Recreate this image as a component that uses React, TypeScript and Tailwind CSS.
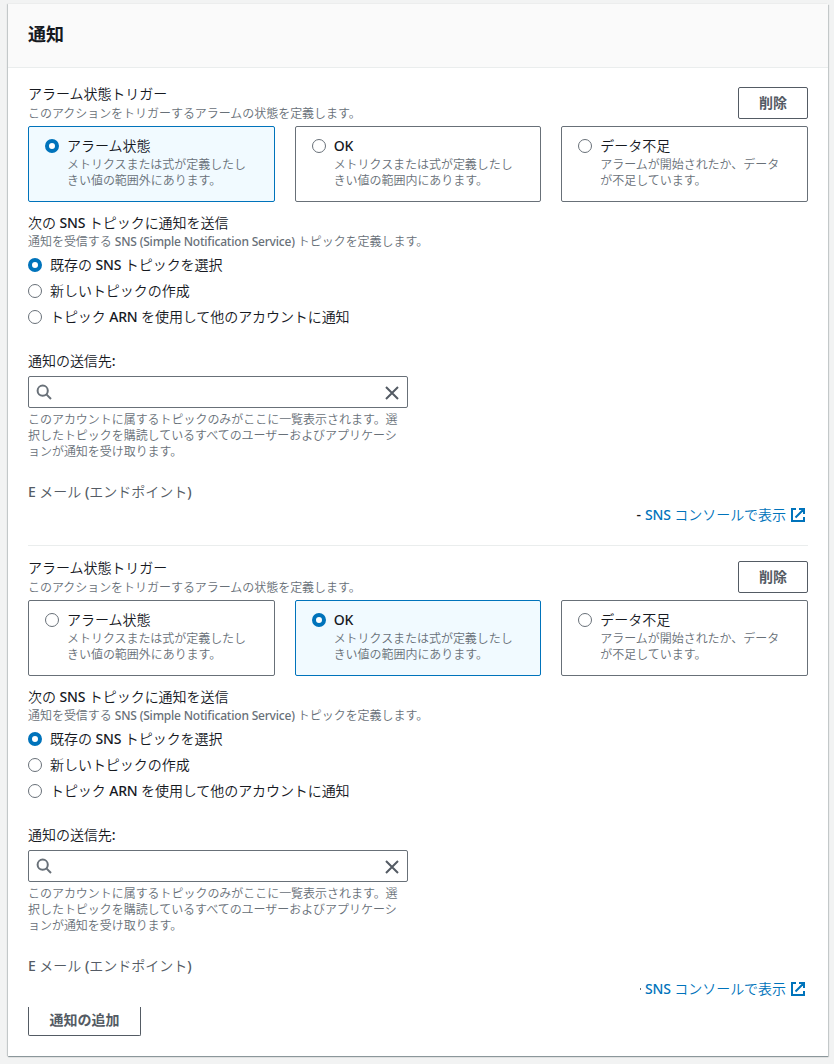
import { ReactNode } from "react";

function Radio({ checked }: { checked: boolean }) {
  return (
    <svg viewBox="0 0 14 14" className="size-3.5 shrink-0">
      {checked ? (
        <circle cx="7" cy="7" r="5" fill="#fff" stroke="#0073bb" strokeWidth="4" />
      ) : (
        <circle cx="7" cy="7" r="6.5" fill="#fff" stroke="#687078" strokeWidth="1" />
      )}
    </svg>
  );
}

function Latin({ children }: { children: ReactNode }) {
  return <span className="font-medium tracking-[-0.2px]">{children}</span>;
}

const states = [
  { title: "アラーム状態", lines: ["メトリクスまたは式が定義したし", "きい値の範囲外にあります。"] },
  { title: "OK", lines: ["メトリクスまたは式が定義したし", "きい値の範囲内にあります。"] },
  { title: "データ不足", lines: ["アラームが開始されたか、データ", "が不足しています。"] },
];

function StateCard({ index, selected }: { index: number; selected: boolean }) {
  const { title, lines } = states[index];
  return (
    <div
      className={`flex h-[76px] gap-2 rounded-xs border pt-2 pl-4 ${
        selected ? "border-[#0073bb] bg-[#f1faff]" : "border-[#687078] bg-white"
      }`}
    >
      <div className="pt-1">
        <Radio checked={selected} />
      </div>
      <div className="whitespace-nowrap">
        <div className="leading-[22px]">{title === "OK" ? <Latin>OK</Latin> : title}</div>
        <div className="text-xs leading-4 text-[#687078]">
          {lines.map((line) => (
            <div key={line}>{line}</div>
          ))}
        </div>
      </div>
    </div>
  );
}

function SearchIcon() {
  return (
    <svg viewBox="0 0 16 16" className="size-4" fill="none" stroke="#687078" strokeWidth="2">
      <circle cx="6.7" cy="6.7" r="5.1" />
      <path d="M10.4 10.4 15 15" />
    </svg>
  );
}

function CloseIcon() {
  return (
    <svg viewBox="0 0 16 16" className="mt-0.5 size-4" fill="none" stroke="#545b64" strokeWidth="2">
      <path d="M2 2 14 14M14 2 2 14" />
    </svg>
  );
}

function ExternalIcon() {
  return (
    <svg viewBox="0 0 16 16" className="size-4" fill="none" stroke="#0073bb" strokeWidth="2">
      <path d="M6 2H2v12h12v-4M9 2h5v5M13.5 2.5 5.5 10.5" />
    </svg>
  );
}

function Notification({ selected, dash, last }: { selected: number; dash: ReactNode; last?: boolean }) {
  return (
    <section className={last ? "pt-[11px]" : "h-[474px] border-b border-[#eaeded] pt-[11px]"}>
      <div className="flex justify-between">
        <div>
          <h3 className="leading-[22px]">アラーム状態トリガー</h3>
          <p className="mt-px text-xs leading-4 text-[#687078]">このアクションをトリガーするアラームの状態を定義します。</p>
        </div>
        <button className="mt-1 h-8 w-[70px] rounded-xs border border-[#545b64] font-bold text-[#545b64]">削除</button>
      </div>
      <div className="mt-1 grid grid-cols-3 gap-5">
        {states.map((state, i) => (
          <StateCard key={state.title} index={i} selected={i === selected} />
        ))}
      </div>
      <h3 className="mt-2.5 leading-[22px]">
        次の <Latin>SNS</Latin> トピックに通知を送信
      </h3>
      <p className="text-xs leading-4 text-[#687078]">
        通知を受信する <Latin>SNS (Simple Notification Service)</Latin> トピックを定義します。
      </p>
      <div className="mt-1 flex flex-col gap-1 leading-[22px]">
        <div className="flex items-center gap-2">
          <Radio checked />
          <span>
            既存の <Latin>SNS</Latin> トピックを選択
          </span>
        </div>
        <div className="flex items-center gap-2">
          <Radio checked={false} />
          <span>新しいトピックの作成</span>
        </div>
        <div className="flex items-center gap-2">
          <Radio checked={false} />
          <span className="tracking-[-0.08px]">
            トピック <Latin>ARN</Latin> を使用して他のアカウントに通知
          </span>
        </div>
      </div>
      <div className="mt-[22px] leading-[22px]">
        通知の送信先<span className="font-medium">:</span>
      </div>
      <div className="mt-1 flex h-8 w-[380px] items-center justify-between rounded-xs border border-[#687078] px-[7px]">
        <SearchIcon />
        <CloseIcon />
      </div>
      <div className="mt-1 text-xs leading-4 whitespace-nowrap text-[#687078]">
        <div>このアカウントに属するトピックのみがここに一覧表示されます。選</div>
        <div>択したトピックを購読しているすべてのユーザーおよびアプリケーシ</div>
        <div>ョンが通知を受け取ります。</div>
      </div>
      <div className="mt-[21px] leading-[22px] tracking-normal text-[#545b64]">
        <Latin>E</Latin> メール <span className="font-medium">(</span>エンドポイント<span className="font-medium">)</span>
      </div>
      <div className="mt-px flex items-center justify-end pr-0.5 leading-[22px]">
        {dash}
        <a className="flex items-center gap-1 text-[#0073bb]">
          <span>
            <Latin>SNS</Latin> コンソールで表示
          </span>
          <ExternalIcon />
        </a>
      </div>
    </section>
  );
}

export default function App() {
  return (
    <div className="h-[1064px] w-[834px] bg-[#f2f3f3] px-2 pt-1 font-['Noto_Sans','Noto_Sans_CJK_JP',sans-serif] text-sm font-[350] tracking-[-0.04px] text-[#16191f]">
      <main className="h-[1052px] w-[820px] bg-white shadow-[0_1px_1px_0_rgba(0,28,36,0.3),1px_1px_1px_0_rgba(0,28,36,0.15),-1px_0_1px_0_rgba(0,28,36,0.15)]">
        <header className="flex h-16 items-center border-b border-[#eaeded] bg-[#fafafa] px-5 pb-1">
          <h2 className="text-lg font-bold">通知</h2>
        </header>
        <div className="px-5 pt-1">
          <Notification selected={0} dash={<span className="mr-1 font-medium">-</span>} />
          <Notification selected={1} dash={<span className="mr-1 h-0.5 w-px bg-[#687078]" />} last />
          <button className="mt-[7px] h-[29px] w-[113px] rounded-b-xs border border-t-0 border-[#545b64] pb-0.5 font-bold text-[#545b64]">
            通知の追加
          </button>
        </div>
      </main>
    </div>
  );
}
